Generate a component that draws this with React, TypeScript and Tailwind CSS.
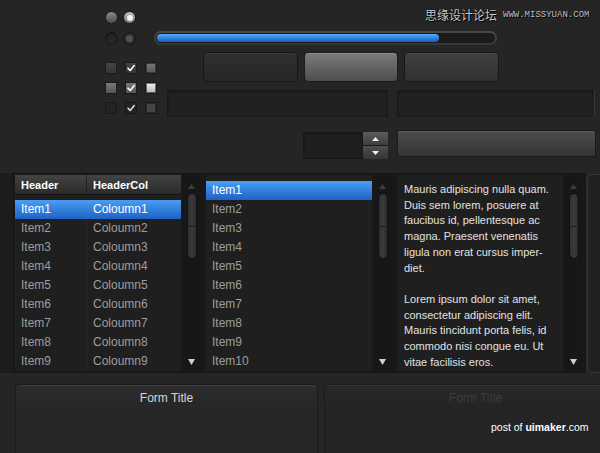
import React from 'react';

const items = ['Item1', 'Item2', 'Item3', 'Item4', 'Item5', 'Item6', 'Item7', 'Item8', 'Item9'];
const listItems = [...items, 'Item10'];

function Check({ color = '#ffffff' }: { color?: string }) {
  return (
    <svg width="10" height="10" viewBox="0 0 10 10">
      <path d="M2 5.2 L4.2 7.4 L8.2 2.6" fill="none" stroke={color} strokeWidth="1.6" strokeLinecap="round" strokeLinejoin="round" />
    </svg>
  );
}

function Scrollbar() {
  return (
    <div className="w-[19px] shrink-0 bg-[#171717] flex flex-col items-center pt-[9px] pb-[6px]">
      <svg width="7" height="5" viewBox="0 0 7 5">
        <path d="M3.5 0 L7 5 L0 5 Z" fill="#3c3c3c" />
      </svg>
      <div className="mt-[4px] w-[10px] h-[66px] rounded-full bg-gradient-to-r from-[#303030] via-[#3a3a3a] to-[#2c2c2c] border border-[#111] flex items-center justify-center">
        <div className="w-[6px] h-[1px] bg-[#1c1c1c]" />
      </div>
      <div className="flex-1" />
      <svg width="7" height="6" viewBox="0 0 7 6">
        <path d="M0 0 L7 0 L3.5 6 Z" fill="#d0d0d0" />
      </svg>
    </div>
  );
}

function Pane({ children }: { children: React.ReactNode }) {
  return (
    <div className="w-[190px] h-[200px] shrink-0 flex gap-[1px] bg-[#1a1a1a] border border-[#151515] p-[1px]">
      <div className="flex-1 min-w-0 bg-[#1f1f1f] overflow-hidden">{children}</div>
      <Scrollbar />
    </div>
  );
}

export default function App() {
  return (
    <div className="relative w-[600px] h-[453px] overflow-hidden bg-[#252525] font-['Liberation_Sans',Arial,sans-serif]">
      {/* watermark */}
      <div className="absolute left-[425px] top-[8px] flex items-center gap-[6px]">
        <span className="text-[12px] leading-[14px] text-[#c8c8c8] font-['Noto_Sans_CJK_SC',sans-serif] [text-shadow:0_0_1px_#000,1px_1px_0_#000]">思缘设计论坛</span>
        <span className="text-[9px] leading-[10px] text-[#bdbdbd] font-['Liberation_Mono',monospace] [text-shadow:1px_1px_0_#000]">WWW.MISSYUAN.COM</span>
      </div>

      {/* radios + progress */}
      <div className="flex pl-[105px] pt-[11px]">
        <div className="w-[49px] grid grid-cols-[13px_13px] gap-x-[5px] gap-y-[7px]">
          <div className="w-[13px] h-[13px] rounded-full bg-gradient-to-b from-[#8a8a8a] to-[#4e4e4e] border border-[#1c1c1c]" />
          <div className="w-[13px] h-[13px] rounded-full bg-gradient-to-b from-[#bdbdbd] to-[#7a7a7a] border border-[#1c1c1c] flex items-center justify-center">
            <div className="w-[6px] h-[6px] rounded-full bg-[#f2f2f2]" />
          </div>
          <div className="w-[13px] h-[13px] rounded-full bg-[#262626] border border-[#161616] shadow-[inset_0_1px_1px_rgba(0,0,0,0.6)]" />
          <div className="w-[13px] h-[13px] rounded-full bg-[#2a2a2a] border border-[#161616] flex items-center justify-center">
            <div className="w-[7px] h-[7px] rounded-full bg-[#505050]" />
          </div>
        </div>
        <div className="mt-[20px] w-[343px] h-[14px] rounded-full bg-gradient-to-b from-[#4a4a4a] to-[#363636] p-[2px]">
          <div className="h-full rounded-full bg-[#1b1b1b] p-[1px]">
            <div className="h-full w-[282px] rounded-full bg-gradient-to-b from-[#5aaaf5] via-[#2f84e0] to-[#1a5fbf]" />
          </div>
        </div>
      </div>

      {/* checkboxes + buttons + inputs */}
      <div className="flex pl-[105px] mt-[7px]">
        <div className="w-[52px] pt-[10px] grid grid-cols-[12px_12px_12px] gap-x-[8px] gap-y-[8px] content-start">
          <div className="w-[12px] h-[12px] bg-gradient-to-b from-[#444] to-[#363636] border border-[#1a1a1a]" />
          <div className="w-[12px] h-[12px] bg-gradient-to-b from-[#444] to-[#363636] border border-[#1a1a1a] flex items-center justify-center"><Check /></div>
          <div className="w-[12px] h-[12px] bg-[#3a3a3a] border border-[#1a1a1a] flex items-center justify-center">
            <div className="w-[8px] h-[8px] bg-gradient-to-b from-[#777] to-[#5a5a5a]" />
          </div>
          <div className="w-[12px] h-[12px] bg-gradient-to-b from-[#7a7a7a] to-[#555] border border-[#1a1a1a]" />
          <div className="w-[12px] h-[12px] bg-gradient-to-b from-[#7a7a7a] to-[#555] border border-[#1a1a1a] flex items-center justify-center"><Check /></div>
          <div className="w-[12px] h-[12px] bg-gradient-to-b from-[#7a7a7a] to-[#5a5a5a] border border-[#1a1a1a] flex items-center justify-center">
            <div className="w-[8px] h-[8px] bg-gradient-to-b from-[#eee] to-[#bbb]" />
          </div>
          <div className="w-[12px] h-[12px] bg-[#232323] border border-[#181818]" />
          <div className="w-[12px] h-[12px] bg-[#232323] border border-[#181818] flex items-center justify-center"><Check color="#d8d8d8" /></div>
          <div className="w-[12px] h-[12px] bg-[#2a2a2a] border border-[#181818] flex items-center justify-center">
            <div className="w-[8px] h-[8px] bg-[#444]" />
          </div>
        </div>
        <div className="flex flex-col">
          <div className="flex ml-[46px] gap-[6px] h-[30px]">
            <div className="w-[95px] rounded-[4px] bg-gradient-to-b from-[#2f2f2f] to-[#272727] border border-[#161616] shadow-[inset_0_1px_0_rgba(255,255,255,0.05)]" />
            <div className="w-[94px] rounded-[4px] bg-gradient-to-b from-[#7c7c7c] to-[#4d4d4d] border border-[#1c1c1c] shadow-[inset_0_1px_0_rgba(255,255,255,0.15)]" />
            <div className="w-[95px] rounded-[4px] bg-gradient-to-b from-[#3f3f3f] to-[#313131] border border-[#181818] shadow-[inset_0_1px_0_rgba(255,255,255,0.06)]" />
          </div>
          <div className="flex ml-[10px] mt-[8px] gap-[9px] h-[27px]">
            <div className="w-[221px] bg-[#212121] border border-[#191919] shadow-[inset_0_1px_2px_rgba(0,0,0,0.4)]" />
            <div className="w-[198px] bg-[#212121] border border-[#191919] border-r-[#3a3a3a] shadow-[inset_0_1px_2px_rgba(0,0,0,0.4)]" />
          </div>
        </div>
      </div>

      {/* spinner + select */}
      <div className="flex pl-[303px] mt-[13px] items-start">
        <div className="mt-[2px] flex h-[27px]">
          <div className="w-[60px] bg-[#1f1f1f] border border-[#191919] shadow-[inset_0_1px_2px_rgba(0,0,0,0.4)]" />
          <div className="w-[25px] flex flex-col gap-[1px] bg-[#1a1a1a]">
            <div className="flex-1 flex items-center justify-center bg-gradient-to-b from-[#5c5c5c] to-[#3e3e3e]">
              <svg width="7" height="4" viewBox="0 0 7 4"><path d="M3.5 0 L7 4 L0 4 Z" fill="#f0f0f0" /></svg>
            </div>
            <div className="flex-1 flex items-center justify-center bg-gradient-to-b from-[#4e4e4e] to-[#353535]">
              <svg width="7" height="4" viewBox="0 0 7 4"><path d="M0 0 L7 0 L3.5 4 Z" fill="#f0f0f0" /></svg>
            </div>
          </div>
        </div>
        <div className="ml-[9px] w-[199px] h-[27px] rounded-[2px] bg-gradient-to-b from-[#4d4d4d] to-[#343434] border border-[#1a1a1a] shadow-[inset_0_1px_0_rgba(255,255,255,0.08)]" />
      </div>

      {/* panes */}
      <div className="flex pl-[13px] mt-[14px] gap-[1px] bg-[#1c1c1c] h-[200px]">
        <Pane>
          <div className="h-[20px] flex bg-gradient-to-b from-[#434343] to-[#2b2b2b] border-b border-[#111] text-[11px] font-bold text-white leading-[20px]">
            <div className="w-[72px] pl-[6px] border-r border-[#222]">Header</div>
            <div className="flex-1 pl-[6px]">HeaderCol</div>
          </div>
          <div className="mt-[5px] relative">
            <div className="absolute left-[71px] top-0 bottom-0 w-[1px] bg-[#2a2a2a]" />
            {items.map((it, i) => (
              <div
                key={it}
                className={
                  i === 0
                    ? 'relative h-[19px] flex text-[12px] leading-[19px] text-white bg-gradient-to-b from-[#4b9df2] to-[#1d62c6]'
                    : 'relative h-[19px] flex text-[12px] leading-[19px] text-[#9d9d9d]'
                }
              >
                <div className="w-[72px] pl-[6px]">{it}</div>
                <div className="flex-1 pl-[6px]">{'Coloumn' + (i + 1)}</div>
              </div>
            ))}
          </div>
        </Pane>
        <Pane>
          <div className="pt-[6px]">
            {listItems.map((it, i) => (
              <div
                key={it}
                className={
                  i === 0
                    ? 'h-[19px] pl-[6px] text-[12px] leading-[19px] text-white bg-gradient-to-b from-[#4b9df2] to-[#1d62c6]'
                    : 'h-[19px] pl-[6px] text-[12px] leading-[19px] text-[#9d9d9d]'
                }
              >
                {it}
              </div>
            ))}
          </div>
        </Pane>
        <Pane>
          <div className="pt-[7px] pl-[7px] text-[11px] leading-[15.7px] text-[#e2e2e2] whitespace-nowrap">
            Mauris adipiscing nulla quam.<br />
            Duis sem lorem, posuere at<br />
            faucibus id, pellentesque ac<br />
            magna. Praesent venenatis<br />
            ligula non erat cursus imper-<br />
            diet.<br />
            <br />
            Lorem ipsum dolor sit amet,<br />
            consectetur adipiscing elit.<br />
            Mauris tincidunt porta felis, id<br />
            commodo nisi congue eu. Ut<br />
            vitae facilisis eros.
          </div>
        </Pane>
        <div className="w-[30px] shrink-0 bg-[#252525] pl-[1px] pt-[1px]">
          <div className="h-[199px] rounded-[5px] border border-[#363636] bg-[#202020]" />
        </div>
      </div>

      {/* forms */}
      <div className="flex pl-[15px] mt-[11px] gap-[6px]">
        <div className="w-[303px] h-[80px] shrink-0 rounded-t-[4px] border border-[#1a1a1a] bg-gradient-to-b from-[#2d2d2d] to-[#262626] to-[30%] shadow-[inset_0_1px_0_rgba(255,255,255,0.08)]">
          <div className="pt-[6px] text-center text-[12px] leading-[14px] text-[#d6d6d6]">Form Title</div>
        </div>
        <div className="w-[303px] h-[80px] shrink-0 rounded-t-[4px] border border-[#1a1a1a] bg-gradient-to-b from-[#292929] to-[#242424] to-[30%] shadow-[inset_0_1px_0_rgba(255,255,255,0.06)]">
          <div className="pt-[6px] text-center text-[12px] leading-[14px] text-[#3c3c3c]">Form Title</div>
        </div>
      </div>

      {/* credit */}
      <div className="absolute left-[491px] top-[421px] text-[10.5px] leading-[13px] text-white">
        post of <span className="font-bold">uimaker</span>.com
      </div>
    </div>
  );
}
